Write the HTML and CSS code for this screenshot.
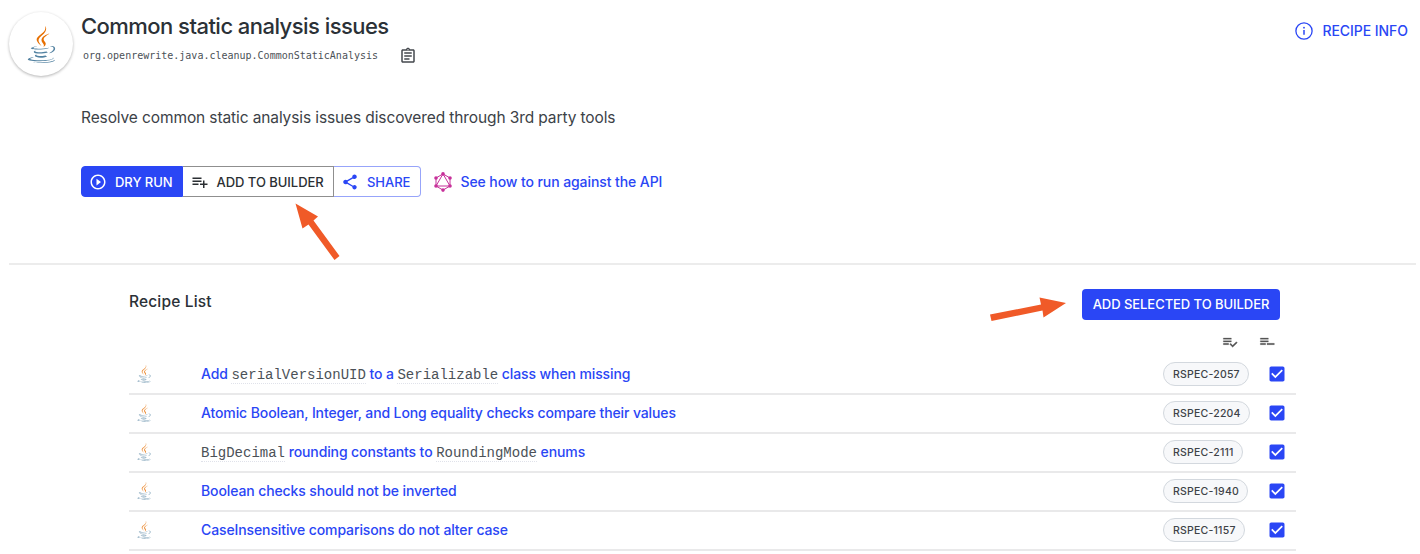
FILE: index.html
```html
<!DOCTYPE html>
<html lang="en">
<head>
<meta charset="utf-8">
<title>Common static analysis issues</title>
<link rel="stylesheet" href="styles.css">
</head>
<body>
<svg class="defs" aria-hidden="true">
  <symbol id="java" viewBox="0 0 24 24">
    <path fill="#5382a1" d="M8.851 18.56s-.917.534.653.714c1.902.218 2.874.187 4.969-.211 0 0 .552.346 1.321.646-4.699 2.013-10.633-.118-6.943-1.149M8.276 15.933s-1.028.761.542.924c2.032.209 3.636.227 6.413-.308 0 0 .384.389.987.602-5.679 1.661-12.007.13-7.942-1.218M19.33 20.504s.679.559-.747.991c-2.712.822-11.288 1.069-13.669.033-.856-.373.75-.89 1.254-.998.527-.114.828-.093.828-.093-.953-.671-6.156 1.317-2.643 1.887 9.58 1.553 17.462-.7 14.977-1.82M9.292 13.21s-4.362 1.036-1.544 1.412c1.189.159 3.561.123 5.77-.062 1.806-.152 3.618-.477 3.618-.477s-.637.272-1.098.587c-4.429 1.165-12.986.623-10.522-.568 2.082-1.006 3.776-.892 3.776-.892M17.116 17.584c4.503-2.34 2.421-4.589.968-4.285-.355.074-.515.138-.515.138s.132-.207.385-.297c2.875-1.011 5.086 2.981-.928 4.562 0-.001.07-.062.09-.118M9.734 23.924c4.322.277 10.959-.153 11.116-2.198 0 0-.302.775-3.572 1.391-3.688.694-8.239.613-10.937.168 0-.001.553.457 3.393.639"/>
    <path fill="#e76f00" d="M13.116 11.475c1.158 1.333-.304 2.533-.304 2.533s2.939-1.518 1.589-3.418c-1.261-1.772-2.228-2.652 3.007-5.688 0-.001-8.216 2.051-4.292 6.573M14.401 0s2.494 2.494-2.365 6.33c-3.896 3.077-.888 4.832-.001 6.836-2.274-2.053-3.943-3.858-2.824-5.539 1.644-2.469 6.197-3.665 5.19-7.627"/>
  </symbol>
  <symbol id="check" viewBox="0 0 24 24">
    <path fill="currentColor" d="M19 3H5c-1.11 0-2 .9-2 2v14c0 1.1.89 2 2 2h14c1.11 0 2-.9 2-2V5c0-1.1-.89-2-2-2zm-9 14l-5-5 1.41-1.41L10 14.17l7.59-7.59L19 8l-9 9z"/>
  </symbol>
</svg>

<header class="header">
  <div class="avatar"><svg><use href="#java"/></svg></div>
  <div class="heading">
    <h1 class="title">Common static analysis issues</h1>
    <div class="id-row">
      <span class="recipe-id">org.openrewrite.java.cleanup.CommonStaticAnalysis</span>
      <svg class="copy" viewBox="0 0 24 24"><path fill="currentColor" d="M7 15h7v2H7zm0-4h10v2H7zm0-4h10v2H7zm12-4h-4.18C14.4 1.84 13.3 1 12 1c-1.3 0-2.4.84-2.82 2H5c-1.1 0-2 .9-2 2v14c0 1.1.9 2 2 2h14c1.1 0 2-.9 2-2V5c0-1.1-.9-2-2-2zm-7-.25c.41 0 .75.34.75.75s-.34.75-.75.75-.75-.34-.75-.75.34-.75.75-.75zM19 19H5V5h14v14z"/></svg>
    </div>
  </div>
  <a class="info">
    <svg viewBox="0 0 18 18" fill="none" stroke="currentColor"><circle cx="9" cy="9" r="8.1" stroke-width="1.3"/><path d="M9 8v4.7" stroke-width="1.5"/><circle cx="9" cy="5.7" r=".9" fill="currentColor" stroke="none"/></svg>
    <span>RECIPE INFO</span>
  </a>
</header>

<section class="intro">
  <p class="description">Resolve common static analysis issues discovered through 3rd party tools</p>
  <div class="actions">
    <div class="group">
      <button class="btn primary"><svg viewBox="0 0 24 24"><path fill="currentColor" d="M10 16.5l6-4.5-6-4.5v9zM12 2C6.48 2 2 6.48 2 12s4.48 10 10 10 10-4.48 10-10S17.52 2 12 2zm0 18c-4.41 0-8-3.59-8-8s3.59-8 8-8 8 3.59 8 8-3.59 8-8 8z"/></svg><span>DRY RUN</span></button>
      <button class="btn builder"><svg viewBox="0 0 24 24"><path fill="currentColor" d="M14 10H2v2h12v-2zm0-4H2v2h12V6zm4 8v-4h-2v4h-4v2h4v4h2v-4h4v-2h-4zM2 16h8v-2H2v2z"/></svg><span>ADD TO BUILDER</span></button>
      <button class="btn share"><svg viewBox="0 0 24 24"><path fill="currentColor" d="M18 16.08c-.76 0-1.44.3-1.96.77L8.91 12.7c.05-.23.09-.46.09-.7s-.04-.47-.09-.7l7.05-4.11c.54.5 1.25.81 2.04.81 1.66 0 3-1.34 3-3s-1.34-3-3-3-3 1.34-3 3c0 .24.04.47.09.7L8.04 9.81C7.5 9.31 6.79 9 6 9c-1.66 0-3 1.34-3 3s1.34 3 3 3c.79 0 1.5-.31 2.04-.81l7.12 4.16c-.05.21-.08.43-.08.65 0 1.61 1.31 2.92 2.92 2.92s2.92-1.31 2.92-2.92-1.31-2.92-2.92-2.92z"/></svg><span>SHARE</span></button>
    </div>
    <a class="api">
      <svg viewBox="0 0 20 20" fill="none" stroke="currentColor"><path d="M10 1.9 17 6v8l-7 4.1L3 14V6zM10 1.9 17 14H3z" stroke-width="1"/><g fill="currentColor" stroke="none"><circle cx="10" cy="1.9" r="1.8"/><circle cx="17" cy="6" r="1.8"/><circle cx="17" cy="14" r="1.8"/><circle cx="10" cy="18.1" r="1.8"/><circle cx="3" cy="14" r="1.8"/><circle cx="3" cy="6" r="1.8"/></g></svg>
      <span>See how to run against the API</span>
    </a>
  </div>
</section>

<main class="recipes">
  <div class="list-head">
    <h2 class="list-title">Recipe List</h2>
    <button class="add-selected">ADD SELECTED TO BUILDER</button>
  </div>
  <div class="tools">
    <svg viewBox="0 0 24 24"><path fill="currentColor" d="M14 10H2v2h12v-2zm0-4H2v2h12V6zM2 16h8v-2H2v2zm19.500-4.500L23 13l-6.990 7-4.510-4.500L13 14l3.010 3 5.490-5.500z"/></svg>
    <svg viewBox="0 0 24 24"><path fill="currentColor" d="M14 10H2v2h12v-2zm0-4H2v2h12V6zM2 16h8v-2H2v2zm10-2v2h11v-2z"/></svg>
  </div>
  <div class="row"><svg class="lang"><use href="#java"/></svg><a class="link">Add <code>serialVersionUID</code> to a <code>Serializable</code> class when missing</a><div class="tags"><span class="chip">RSPEC-2057</span></div><svg class="box"><use href="#check"/></svg></div>
  <div class="row"><svg class="lang"><use href="#java"/></svg><a class="link">Atomic Boolean, Integer, and Long equality checks compare their values</a><div class="tags"><span class="chip">RSPEC-2204</span></div><svg class="box"><use href="#check"/></svg></div>
  <div class="row"><svg class="lang"><use href="#java"/></svg><a class="link"><code>BigDecimal</code> rounding constants to <code>RoundingMode</code> enums</a><div class="tags"><span class="chip">RSPEC-2111</span></div><svg class="box"><use href="#check"/></svg></div>
  <div class="row"><svg class="lang"><use href="#java"/></svg><a class="link">Boolean checks should not be inverted</a><div class="tags"><span class="chip">RSPEC-1940</span></div><svg class="box"><use href="#check"/></svg></div>
  <div class="row"><svg class="lang"><use href="#java"/></svg><a class="link">CaseInsensitive comparisons do not alter case</a><div class="tags"><span class="chip">RSPEC-1157</span></div><svg class="box"><use href="#check"/></svg></div>
</main>

<!-- Callout arrows pointing at the two builder buttons -->
<svg class="callouts" viewBox="0 0 1420 554" fill="#f05a28"><path d="M295.500 203.500 318 216.500 313.500 220.500 339.500 256 334.500 260 308.500 224.500 302.500 228.500z"/><path d="M1066 303 1043.500 317.500 1042.500 310.500 991.500 321 990 314.500 1041 304.500 1039.500 297.500z"/></svg>
</body>
</html>
```
FILE: styles.css
```css
* { box-sizing: border-box; }
body {
  margin: 0;
  height: 554px;
  overflow: hidden;
  background: #fff;
  color: #2b3137;
  font-family: Inter, "Liberation Sans", sans-serif;
  font-size: 15px;
}
h1, h2, p { margin: 0; }
svg { display: block; flex: none; }
button { font: inherit; cursor: pointer; }
.defs { position: absolute; width: 0; height: 0; }

.header {
  display: flex;
  align-items: flex-start;
  height: 90px;
  padding: 12px 12px 0 9px;
}
.avatar {
  display: flex;
  align-items: center;
  justify-content: center;
  width: 64px;
  height: 64px;
  border-radius: 50%;
  box-shadow: 0 1px 3px rgba(0, 0, 0, .3);
}
.avatar svg { width: 37px; height: 37px; }
.heading { flex: 1; padding-left: 8px; }
.title {
  height: 30px;
  line-height: 29px;
  font-size: 22px;
  font-weight: 500;
  letter-spacing: -.54px;
}
.id-row { display: flex; align-items: center; height: 27px; padding-left: 2px; }
.recipe-id { padding-top: 1px; font: 10px/26px "DejaVu Sans Mono", monospace; color: #4b5157; }
.copy { width: 18px; height: 18px; margin-left: 20.5px; color: #44484d; }
.info {
  display: flex;
  align-items: center;
  gap: 9.5px;
  height: 37px;
  color: #2a46f5;
  font-size: 14px;
  font-weight: 500;
  letter-spacing: -.05px;
}
.info svg { width: 18px; height: 18px; }

.intro {
  height: 175px;
  margin: 0 4px 0 9px;
  padding: 16px 0 0 72px;
  border-bottom: 2px solid #ececec;
}
.description { height: 24px; line-height: 24px; font-size: 15.5px; letter-spacing: -.11px; color: #3c4247; }
.actions { display: flex; align-items: center; padding-top: 36px; }
.group { display: flex; }
.btn {
  display: flex;
  align-items: center;
  height: 31px;
  padding: 0 0 0 8px;
  background: #fff;
  font-size: 13px;
  font-weight: 500;
  letter-spacing: -.03px;
  white-space: nowrap;
}
.btn svg { width: 18px; height: 18px; margin-right: 8px; }
.primary { width: 102px; padding-left: 7px; border: 1px solid #2a46f5; border-radius: 4px 0 0 4px; background: #2a46f5; color: #fff; }
.builder { width: 151px; padding-left: 7.5px; border: 1px solid #8f8f8f; border-left: 0; color: #2b2f33; }
.share { width: 87px; padding-left: 7px; border: 1px solid #97a4fa; border-left: 0; border-radius: 0 4px 4px 0; color: #2a46f5; }
.api {
  display: flex;
  align-items: center;
  gap: 8px;
  margin-left: 11.5px;
  color: #2a46f5;
  font-size: 14px;
  font-weight: 500;
  letter-spacing: -.09px;
}
.api svg { width: 20px; height: 20px; color: #c7309a; }

.recipes { width: 1167px; margin-left: 129px; }
.list-head {
  display: flex;
  justify-content: space-between;
  height: 63px;
  padding: 24px 16px 0 0;
}
.list-title { height: 26px; line-height: 26px; font-size: 15.5px; font-weight: 500; letter-spacing: .16px; }
.add-selected {
  width: 198px;
  height: 31px;
  padding: 0 0 2px;
  border: 0;
  border-radius: 4px;
  background: #2a46f5;
  color: #fff;
  font-size: 13px;
  font-weight: 500;
  letter-spacing: -.05px;
}
.tools {
  display: flex;
  justify-content: flex-end;
  gap: 21px;
  height: 28px;
  padding: 6px 21.5px 0 0;
  color: #555;
}
.tools svg { width: 16px; height: 16px; stroke: currentColor; stroke-width: .4; }
.row {
  display: flex;
  align-items: center;
  height: 39px;
  padding-bottom: 1px;
  border-bottom: 2px solid #e9e9ea;
}
.lang { width: 18px; height: 18px; margin: 0 48px 0 6px; opacity: .75; }
.link { flex: 1; padding-bottom: 1px; color: #2a46f5; font-size: 14px; font-weight: 500; letter-spacing: -.11px; white-space: nowrap; }
code {
  border-bottom: 1px dotted #e0e2ea;
  color: #4b5157;
  font: 14px "Liberation Mono", monospace;
  letter-spacing: 0;
}
.tags { display: flex; width: 104px; }
.chip {
  height: 24px;
  padding: 0 8px 0 9px;
  border: 1px solid #d3d8de;
  border-radius: 12px;
  background: #f7f8fa;
  color: #3d4247;
  font-size: 10.5px;
  font-weight: 500;
  line-height: 24px;
  letter-spacing: .22px;
}
.box { width: 20px; height: 20px; margin-right: 9px; color: #2a46f5; }
.callouts { position: absolute; top: 0; left: 0; width: 1420px; height: 554px; pointer-events: none; }
```
